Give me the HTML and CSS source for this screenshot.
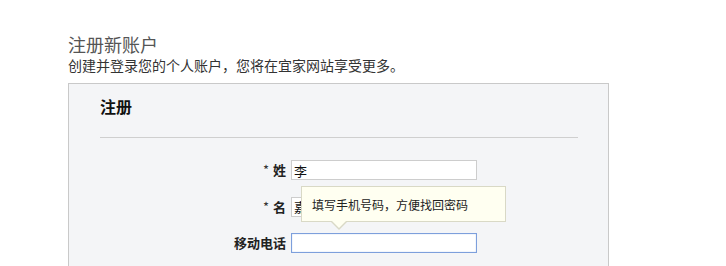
FILE: index.html
```html
<!DOCTYPE html>
<html lang="zh-CN">
<head>
  <meta charset="UTF-8" />
  <title>注册新账户</title>
  <link rel="stylesheet" href="styles.css">
</head>
<body>
  <div class="page">
    <div class="intro">
      <h1>注册新账户</h1>
      <p>创建并登录您的个人账户，您将在宜家网站享受更多。</p>
    </div>
    <div class="panel">
      <h2>注册</h2>
      <hr class="divider" />
      <form class="reg-form">
        <div class="row">
          <label for="last-name"><span class="req">*</span>姓</label>
          <div class="field">
            <input type="text" id="last-name" value="李" />
          </div>
        </div>
        <div class="row">
          <label for="first-name"><span class="req">*</span>名</label>
          <div class="field">
            <input type="text" id="first-name" value="嘉" />
          </div>
        </div>
        <div class="row">
          <label for="mobile">移动电话</label>
          <div class="field">
            <input type="text" id="mobile" class="focused" />
            <div class="tip">填写手机号码，方便找回密码</div>
          </div>
        </div>
      </form>
    </div>
  </div>
</body>
</html>
```

FILE: styles.css
```css
:root {
  --panel-bg: #f4f5f7;
  --panel-border: #c9c9c9;
  --text-color: #222;
  --tip-bg: #fffff1;
  --tip-border: #d9d9c6;
  --focus-color: #7d9fdc;
}

* {
  box-sizing: border-box;
  margin: 0;
  padding: 0;
}

body {
  font-family: "Noto Sans CJK SC", "Noto Sans", sans-serif;
  color: var(--text-color);
  background: #fff;
  overflow: hidden;
}

.page {
  padding: 32px 0 0 68px;
}

.intro h1 {
  font-size: 18px;
  font-weight: normal;
  color: #555;
  line-height: 24px;
}

.intro p {
  font-size: 14px;
  color: #333;
  line-height: 18px;
}

.panel {
  width: 541px;
  margin-top: 9px;
  background: var(--panel-bg);
  border: 1px solid var(--panel-border);
  padding: 11px 30px 40px 31px;
  min-height: 300px;
}

.panel h2 {
  font-size: 16px;
  font-weight: bold;
  line-height: 22px;
  color: #111;
}

.divider {
  border: none;
  border-top: 1px solid #cfcfcf;
  margin-top: 20px;
}

.reg-form {
  margin-top: 22px;
  margin-left: -31px;
  display: flex;
  flex-direction: column;
  gap: 16.5px;
}

.row {
  display: grid;
  grid-template-columns: 217px 186px;
  column-gap: 5px;
  align-items: center;
  height: 20px;
}

.row label {
  text-align: right;
  font-size: 13px;
  font-weight: bold;
  line-height: 20px;
  color: #222;
}

.req {
  font-weight: normal;
  color: #333;
  margin-right: 4px;
}

.field {
  position: relative;
  height: 20px;
}

input {
  display: block;
  width: 186px;
  height: 20px;
  border: 1px solid #cdcdcd;
  background: #fff;
  font-family: inherit;
  font-size: 13px;
  padding: 0 2px;
  color: #111;
  outline: none;
}

input.focused {
  border-color: var(--focus-color);
  box-shadow: inset 0 0 1px var(--focus-color);
}

.tip {
  position: absolute;
  left: 10px;
  bottom: 31px;
  width: 205px;
  height: 36px;
  padding: 0 10px;
  display: flex;
  align-items: center;
  background: var(--tip-bg);
  border: 1px solid var(--tip-border);
  font-size: 12px;
  color: #222;
  white-space: nowrap;
}

.tip:before,
.tip:after {
  content: "";
  position: absolute;
  left: 29px;
  border-style: solid;
  border-color: transparent;
}

.tip:before {
  top: 35px;
  border-width: 8px 8px 0 8px;
  border-top-color: var(--tip-border);
}

.tip:after {
  top: 34px;
  left: 30px;
  border-width: 7px 7px 0 7px;
  border-top-color: var(--tip-bg);
}
```
